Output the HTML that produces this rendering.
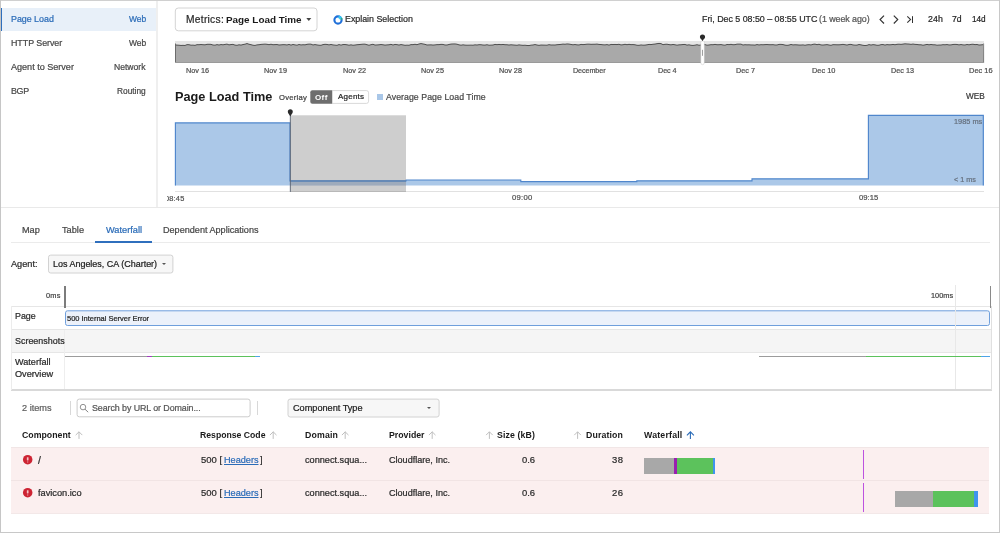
<!DOCTYPE html>
<html><head><meta charset="utf-8">
<style>
html,body{margin:0;padding:0;}
body{width:1000px;height:533px;position:relative;overflow:hidden;background:#fff;font-family:"Liberation Sans",sans-serif;color:#3c3c3c;}
.a{position:absolute;}
.t{position:absolute;white-space:nowrap;line-height:1;will-change:transform;-webkit-text-stroke:0.22px currentColor;}
</style></head><body>
<!-- outer frame -->
<div class="a" style="left:0;top:0;width:1000px;height:1px;background:#d0d0d0;"></div>
<div class="a" style="left:0;top:0;width:1px;height:533px;background:#c6c6c6;"></div>
<div class="a" style="left:999px;top:0;width:1px;height:533px;background:#c8c8c8;"></div>
<div class="a" style="left:0;top:532px;width:1000px;height:1px;background:#c8c8c8;"></div>

<!-- sidebar -->
<div class="a" style="left:1px;top:7.75px;width:155.5px;height:23.5px;background:#e8f0f9;"></div>
<div class="a" style="left:1px;top:7.75px;width:1.3px;height:23.5px;background:#2f6fbd;"></div>
<div class="a" style="left:156.2px;top:1px;width:1.4px;height:206px;background:#efefef;"></div>

<!-- boxes -->
<svg class="a" style="left:0;top:0;" width="1000" height="533" viewBox="0 0 1000 533">
<rect x="175.30" y="8.00" width="141.70" height="22.80" rx="3" fill="#fff" stroke="#d4d4d4" stroke-width="1"/>
<rect x="48.50" y="255.10" width="124.40" height="17.90" rx="2.2" fill="#f7f7f7" stroke="#d2d2d2" stroke-width="1"/>
<rect x="77.10" y="399.10" width="173.00" height="17.70" rx="2.2" fill="#fff" stroke="#cccccc" stroke-width="1"/>
<rect x="288.00" y="399.10" width="151.10" height="17.90" rx="2.2" fill="#f7f7f7" stroke="#d2d2d2" stroke-width="1"/>
<rect x="65.50" y="310.80" width="924.00" height="14.70" rx="2" fill="#ecf1fa" stroke="#6f9fdc" stroke-width="1"/>
<path d="M312.3 90.2 H332.5 V103.8 H312.3 A2 2 0 0 1 310.3 101.8 V92.2 A2 2 0 0 1 312.3 90.2 Z" fill="#6e6e6e"/>
<path d="M332.5 90.6 H366.4 A2.2 2.2 0 0 1 368.6 92.8 V101.2 A2.2 2.2 0 0 1 366.4 103.4 H332.5" fill="#fff" stroke="#cfcfcf" stroke-width="0.8"/>
</svg>
<!-- top toolbar -->
<svg class="a" style="left:305px;top:17px;" width="8" height="5" viewBox="0 0 8 5"><path d="M1.3 1.1 H6.3 L3.8 3.9 Z" fill="#444"/></svg>
<svg class="a" style="left:331.8px;top:13.8px;" width="12" height="12" viewBox="0 0 12 12"><circle cx="6" cy="6" r="3.6" fill="none" stroke="#1f6fd8" stroke-width="2.1"/><path d="M6.6 1.4 A4.6 4.6 0 0 1 10.5 5.2 L7.8 5.6 A2 2 0 0 0 6.4 4.2 Z" fill="#35c6f0"/><circle cx="9.6" cy="4.9" r="0.8" fill="#3aa860"/></svg>
<svg class="a" style="left:876px;top:13px;" width="40" height="13" viewBox="0 0 40 13"><g fill="none" stroke="#333" stroke-width="1.2"><path d="M8 2.7 L4.1 6.6 L8 10.5"/><path d="M17.8 2.7 L21.7 6.6 L17.8 10.5"/><path d="M31.3 3.3 L34.6 6.5 L31.3 9.7" stroke-width="1.05"/><path d="M36.5 3.2 V10" stroke-width="1"/></g></svg>

<!-- mini chart -->
<svg class="a" style="left:174.5px;top:34px;" width="820" height="32" viewBox="0 0 820 32">
<rect x="0" y="7" width="809" height="22" fill="#e6e6e6"/>
<path d="M0 10.92 L2 11.10 L4 11.23 L6 11.44 L8 11.33 L10 11.46 L12 10.63 L14 10.69 L16 11.19 L18 11.13 L20 11.35 L22 10.66 L24 10.71 L26 10.50 L28 10.71 L30 10.83 L32 10.33 L34 10.30 L36 10.36 L38 11.02 L40 11.16 L42 10.62 L44 11.02 L46 10.54 L48 10.80 L50 10.43 L52 10.13 L54 10.87 L56 10.54 L58 10.40 L60 11.10 L62 11.30 L64 10.77 L66 11.08 L68 10.55 L70 10.19 L72 9.54 L74 10.26 L76 10.66 L78 11.24 L80 11.43 L82 10.89 L84 10.71 L86 10.42 L88 10.28 L90 10.13 L92 10.30 L94 10.68 L96 10.25 L98 10.73 L100 10.61 L102 10.52 L104 10.99 L106 10.87 L108 10.65 L110 10.71 L112 10.97 L114 10.43 L116 11.11 L118 10.46 L120 10.90 L122 11.19 L124 10.49 L126 10.95 L128 10.73 L130 10.85 L132 10.33 L134 10.14 L136 10.18 L138 10.98 L140 10.57 L142 10.94 L144 11.23 L146 11.29 L148 10.62 L150 10.32 L152 10.46 L154 10.89 L156 10.46 L158 10.91 L160 11.15 L162 11.32 L164 10.57 L166 11.14 L168 10.55 L170 10.53 L172 10.79 L174 11.21 L176 10.83 L178 11.24 L180 11.04 L182 10.72 L184 10.58 L186 10.38 L188 10.19 L190 10.17 L192 10.71 L194 11.26 L196 10.67 L198 10.29 L200 11.06 L202 10.95 L204 10.77 L206 10.53 L208 10.77 L210 11.11 L212 10.90 L214 10.77 L216 10.34 L218 11.01 L220 10.43 L222 10.63 L224 11.06 L226 10.55 L228 10.92 L230 11.30 L232 11.16 L234 11.25 L236 10.61 L238 10.64 L240 10.31 L242 10.69 L244 10.00 L246 9.57 L248 9.96 L250 10.35 L252 11.00 L254 10.90 L256 10.87 L258 11.07 L260 10.90 L262 10.64 L264 10.63 L266 10.36 L268 10.45 L270 10.99 L272 11.01 L274 10.47 L276 10.08 L278 9.98 L280 9.94 L282 10.22 L284 10.85 L286 11.20 L288 10.84 L290 11.11 L292 11.21 L294 11.18 L296 11.14 L298 11.21 L300 10.85 L302 11.03 L304 10.68 L306 10.73 L308 11.04 L310 11.10 L312 10.73 L314 11.21 L316 11.14 L318 11.03 L320 10.41 L322 10.66 L324 10.43 L326 10.65 L328 10.45 L330 10.71 L332 10.76 L334 11.04 L336 10.77 L338 10.94 L340 11.11 L342 11.27 L344 10.86 L346 11.17 L348 11.34 L350 11.23 L352 11.47 L354 11.56 L356 11.16 L358 10.99 L360 10.55 L362 11.03 L364 11.34 L366 11.02 L368 11.09 L370 11.15 L372 11.19 L374 10.65 L376 11.01 L378 10.97 L380 11.02 L382 10.71 L384 10.57 L386 10.40 L388 10.10 L390 10.26 L392 9.94 L394 10.09 L396 10.46 L398 10.81 L400 10.53 L402 10.86 L404 10.96 L406 10.41 L408 10.60 L410 10.44 L412 10.19 L414 10.16 L416 10.33 L418 10.27 L420 10.25 L422 10.09 L424 10.45 L426 10.52 L428 10.79 L430 10.88 L432 10.58 L434 11.10 L436 10.44 L438 10.54 L440 10.46 L442 10.56 L444 10.31 L446 10.91 L448 10.72 L450 10.30 L452 10.69 L454 10.34 L456 10.64 L458 10.57 L460 10.78 L462 11.25 L464 11.32 L466 10.95 L468 11.18 L470 11.11 L472 10.81 L474 10.41 L476 10.57 L478 10.28 L480 10.05 L482 9.67 L484 9.41 L486 9.62 L488 10.66 L490 10.32 L492 10.23 L494 10.62 L496 10.84 L498 10.46 L500 10.78 L502 11.18 L504 10.85 L506 10.75 L508 10.51 L510 10.46 L512 11.12 L514 10.82 L516 11.27 L518 11.43 L520 11.18 L522 10.73 L524 11.25 L526 11.00 L528 10.80 L530 10.62 L532 11.20 L534 10.97 L536 10.66 L538 10.72 L540 10.38 L542 10.73 L544 10.71 L546 10.55 L548 10.97 L550 11.20 L552 10.48 L554 10.64 L556 10.35 L558 10.73 L560 10.65 L562 10.16 L564 10.15 L566 10.16 L568 11.03 L570 10.71 L572 10.87 L574 10.81 L576 10.95 L578 10.97 L580 11.12 L582 10.56 L584 10.95 L586 10.67 L588 10.77 L590 10.62 L592 10.52 L594 10.70 L596 10.72 L598 10.63 L600 10.97 L602 10.97 L604 10.41 L606 10.38 L608 10.57 L610 11.11 L612 11.33 L614 11.08 L616 10.44 L618 10.92 L620 10.78 L622 10.87 L624 11.04 L626 11.04 L628 10.89 L630 11.25 L632 10.87 L634 10.66 L636 10.94 L638 10.31 L640 10.12 L642 10.68 L644 10.28 L646 10.92 L648 11.06 L650 10.85 L652 10.61 L654 11.00 L656 11.30 L658 10.67 L660 10.72 L662 10.81 L664 10.80 L666 10.63 L668 10.38 L670 10.70 L672 11.07 L674 10.49 L676 10.39 L678 10.93 L680 11.15 L682 11.12 L684 10.47 L686 10.87 L688 11.31 L690 11.53 L692 11.33 L694 10.59 L696 11.05 L698 10.63 L700 10.87 L702 11.28 L704 11.23 L706 10.63 L708 10.52 L710 11.09 L712 10.58 L714 10.81 L716 10.72 L718 10.42 L720 10.75 L722 10.32 L724 10.19 L726 10.39 L728 10.11 L730 9.82 L732 9.98 L734 10.07 L736 10.38 L738 10.05 L740 10.39 L742 10.47 L744 10.77 L746 10.78 L748 11.23 L750 10.87 L752 10.39 L754 10.81 L756 10.46 L758 10.78 L760 10.80 L762 11.21 L764 11.04 L766 11.03 L768 10.67 L770 10.79 L772 10.55 L774 10.94 L776 10.88 L778 10.47 L780 10.39 L782 10.48 L784 10.89 L786 10.52 L788 10.89 L790 10.99 L792 10.47 L794 10.82 L796 10.40 L798 10.25 L800 10.64 L802 10.47 L804 11.03 L806 10.88 L808 10.66 L809 29 L0 29 Z" fill="#a9a9a9"/>
<path d="M0 10.92 L2 11.10 L4 11.23 L6 11.44 L8 11.33 L10 11.46 L12 10.63 L14 10.69 L16 11.19 L18 11.13 L20 11.35 L22 10.66 L24 10.71 L26 10.50 L28 10.71 L30 10.83 L32 10.33 L34 10.30 L36 10.36 L38 11.02 L40 11.16 L42 10.62 L44 11.02 L46 10.54 L48 10.80 L50 10.43 L52 10.13 L54 10.87 L56 10.54 L58 10.40 L60 11.10 L62 11.30 L64 10.77 L66 11.08 L68 10.55 L70 10.19 L72 9.54 L74 10.26 L76 10.66 L78 11.24 L80 11.43 L82 10.89 L84 10.71 L86 10.42 L88 10.28 L90 10.13 L92 10.30 L94 10.68 L96 10.25 L98 10.73 L100 10.61 L102 10.52 L104 10.99 L106 10.87 L108 10.65 L110 10.71 L112 10.97 L114 10.43 L116 11.11 L118 10.46 L120 10.90 L122 11.19 L124 10.49 L126 10.95 L128 10.73 L130 10.85 L132 10.33 L134 10.14 L136 10.18 L138 10.98 L140 10.57 L142 10.94 L144 11.23 L146 11.29 L148 10.62 L150 10.32 L152 10.46 L154 10.89 L156 10.46 L158 10.91 L160 11.15 L162 11.32 L164 10.57 L166 11.14 L168 10.55 L170 10.53 L172 10.79 L174 11.21 L176 10.83 L178 11.24 L180 11.04 L182 10.72 L184 10.58 L186 10.38 L188 10.19 L190 10.17 L192 10.71 L194 11.26 L196 10.67 L198 10.29 L200 11.06 L202 10.95 L204 10.77 L206 10.53 L208 10.77 L210 11.11 L212 10.90 L214 10.77 L216 10.34 L218 11.01 L220 10.43 L222 10.63 L224 11.06 L226 10.55 L228 10.92 L230 11.30 L232 11.16 L234 11.25 L236 10.61 L238 10.64 L240 10.31 L242 10.69 L244 10.00 L246 9.57 L248 9.96 L250 10.35 L252 11.00 L254 10.90 L256 10.87 L258 11.07 L260 10.90 L262 10.64 L264 10.63 L266 10.36 L268 10.45 L270 10.99 L272 11.01 L274 10.47 L276 10.08 L278 9.98 L280 9.94 L282 10.22 L284 10.85 L286 11.20 L288 10.84 L290 11.11 L292 11.21 L294 11.18 L296 11.14 L298 11.21 L300 10.85 L302 11.03 L304 10.68 L306 10.73 L308 11.04 L310 11.10 L312 10.73 L314 11.21 L316 11.14 L318 11.03 L320 10.41 L322 10.66 L324 10.43 L326 10.65 L328 10.45 L330 10.71 L332 10.76 L334 11.04 L336 10.77 L338 10.94 L340 11.11 L342 11.27 L344 10.86 L346 11.17 L348 11.34 L350 11.23 L352 11.47 L354 11.56 L356 11.16 L358 10.99 L360 10.55 L362 11.03 L364 11.34 L366 11.02 L368 11.09 L370 11.15 L372 11.19 L374 10.65 L376 11.01 L378 10.97 L380 11.02 L382 10.71 L384 10.57 L386 10.40 L388 10.10 L390 10.26 L392 9.94 L394 10.09 L396 10.46 L398 10.81 L400 10.53 L402 10.86 L404 10.96 L406 10.41 L408 10.60 L410 10.44 L412 10.19 L414 10.16 L416 10.33 L418 10.27 L420 10.25 L422 10.09 L424 10.45 L426 10.52 L428 10.79 L430 10.88 L432 10.58 L434 11.10 L436 10.44 L438 10.54 L440 10.46 L442 10.56 L444 10.31 L446 10.91 L448 10.72 L450 10.30 L452 10.69 L454 10.34 L456 10.64 L458 10.57 L460 10.78 L462 11.25 L464 11.32 L466 10.95 L468 11.18 L470 11.11 L472 10.81 L474 10.41 L476 10.57 L478 10.28 L480 10.05 L482 9.67 L484 9.41 L486 9.62 L488 10.66 L490 10.32 L492 10.23 L494 10.62 L496 10.84 L498 10.46 L500 10.78 L502 11.18 L504 10.85 L506 10.75 L508 10.51 L510 10.46 L512 11.12 L514 10.82 L516 11.27 L518 11.43 L520 11.18 L522 10.73 L524 11.25 L526 11.00 L528 10.80 L530 10.62 L532 11.20 L534 10.97 L536 10.66 L538 10.72 L540 10.38 L542 10.73 L544 10.71 L546 10.55 L548 10.97 L550 11.20 L552 10.48 L554 10.64 L556 10.35 L558 10.73 L560 10.65 L562 10.16 L564 10.15 L566 10.16 L568 11.03 L570 10.71 L572 10.87 L574 10.81 L576 10.95 L578 10.97 L580 11.12 L582 10.56 L584 10.95 L586 10.67 L588 10.77 L590 10.62 L592 10.52 L594 10.70 L596 10.72 L598 10.63 L600 10.97 L602 10.97 L604 10.41 L606 10.38 L608 10.57 L610 11.11 L612 11.33 L614 11.08 L616 10.44 L618 10.92 L620 10.78 L622 10.87 L624 11.04 L626 11.04 L628 10.89 L630 11.25 L632 10.87 L634 10.66 L636 10.94 L638 10.31 L640 10.12 L642 10.68 L644 10.28 L646 10.92 L648 11.06 L650 10.85 L652 10.61 L654 11.00 L656 11.30 L658 10.67 L660 10.72 L662 10.81 L664 10.80 L666 10.63 L668 10.38 L670 10.70 L672 11.07 L674 10.49 L676 10.39 L678 10.93 L680 11.15 L682 11.12 L684 10.47 L686 10.87 L688 11.31 L690 11.53 L692 11.33 L694 10.59 L696 11.05 L698 10.63 L700 10.87 L702 11.28 L704 11.23 L706 10.63 L708 10.52 L710 11.09 L712 10.58 L714 10.81 L716 10.72 L718 10.42 L720 10.75 L722 10.32 L724 10.19 L726 10.39 L728 10.11 L730 9.82 L732 9.98 L734 10.07 L736 10.38 L738 10.05 L740 10.39 L742 10.47 L744 10.77 L746 10.78 L748 11.23 L750 10.87 L752 10.39 L754 10.81 L756 10.46 L758 10.78 L760 10.80 L762 11.21 L764 11.04 L766 11.03 L768 10.67 L770 10.79 L772 10.55 L774 10.94 L776 10.88 L778 10.47 L780 10.39 L782 10.48 L784 10.89 L786 10.52 L788 10.89 L790 10.99 L792 10.47 L794 10.82 L796 10.40 L798 10.25 L800 10.64 L802 10.47 L804 11.03 L806 10.88 L808 10.66" fill="none" stroke="#484848" stroke-width="0.95" stroke-linejoin="round"/>
<rect x="0" y="9.5" width="0.9" height="19.5" fill="#666"/>
<rect x="808.2" y="9.5" width="0.9" height="19.5" fill="#777"/>
<rect x="0" y="28" width="809" height="1" fill="#9a9a9a"/>
<rect x="525.8" y="6.8" width="3.5" height="23.8" rx="1.6" fill="#fff" stroke="#bdbdbd" stroke-width="0.4"/>
<rect x="527.2" y="15.8" width="0.7" height="6" fill="#777"/>
<path d="M527.5 7.2 C527 5.6 524.9 4.8 524.9 3.1 A2.6 2.6 0 0 1 530.1 3.1 C530.1 4.8 528 5.6 527.5 7.2 Z" fill="#2a2a2a"/>
</svg>

<!-- heading row controls -->
<div class="a" style="left:377.3px;top:94.4px;width:5.6px;height:5.2px;background:#a9c7e8;"></div>

<!-- main chart -->
<svg class="a" style="left:160px;top:105px;" width="840" height="90" viewBox="0 0 840 90">
<path d="M15 80.4 V17.9 H130 V75.9 H246 V75 H360.8 V76.6 H476.8 V75.8 H592 V73.8 H708.2 V10 H823.8 V80.4 Z" fill="#abc8e8"/>
<path d="M15.4 80.4 V17.9 H130 V75.9 H246 V75 H360.8 V76.6 H476.8 V75.8 H592 V73.8 H708.4 V10.4 H823.3 V80.4" fill="none" stroke="#4f86cc" stroke-width="1.15"/>
<rect x="130.3" y="10.3" width="115.7" height="76.5" fill="#ababab" fill-opacity="0.58"/>
<rect x="130.3" y="76.5" width="115.7" height="4" fill="#8f9db3" fill-opacity="0.45"/>
<rect x="130.3" y="75.4" width="115.7" height="1.2" fill="#4877b4"/>
<rect x="15" y="86" width="809" height="0.9" fill="#dedede"/>
<rect x="130.3" y="86" width="115.7" height="0.9" fill="#b4b4b4"/>
<rect x="129.85" y="8" width="0.9" height="78.9" fill="#566070"/>
<path d="M130.3 11.6 C129.6 9.6 127.8 8.6 127.8 6.8 A2.5 2.5 0 0 1 132.8 6.8 C132.8 8.6 131 9.6 130.3 11.6 Z" fill="#2a2a2a"/>
</svg>
<div class="a" style="left:167.3px;top:190px;width:30px;height:16px;overflow:hidden;"><div class="t" style="left:-2.7px;top:4.8px;font-size:7.4px;color:#505050;letter-spacing:0.2px;">08:45</div></div>

<!-- divider -->
<div class="a" style="left:1px;top:206.8px;width:998px;height:1px;background:#e9e9e9;"></div>

<!-- tabs -->
<div class="a" style="left:11px;top:242px;width:979px;height:1px;background:#ebebeb;"></div>
<div class="a" style="left:95px;top:241.2px;width:57px;height:2px;background:#2f6fbd;"></div>

<!-- agent select -->
<div class="a" style="left:161.8px;top:263.4px;width:0;height:0;border-left:2.3px solid transparent;border-right:2.3px solid transparent;border-top:2.5px solid #555;"></div>

<!-- timeline grid -->
<div class="a" style="left:11px;top:306.2px;width:980px;height:1px;background:#e6e6e6;"></div>
<div class="a" style="left:11px;top:330px;width:980px;height:22px;background:#f5f5f5;"></div>
<div class="a" style="left:11px;top:329.2px;width:980px;height:1px;background:#e6e6e6;"></div>
<div class="a" style="left:11px;top:351.5px;width:980px;height:1px;background:#e6e6e6;"></div>
<div class="a" style="left:11px;top:389px;width:980.5px;height:1.6px;background:#d9d9d9;"></div>
<div class="a" style="left:11px;top:306px;width:1px;height:84px;background:#ececec;"></div>
<div class="a" style="left:990.5px;top:306px;width:1px;height:84px;background:#e0e0e0;"></div>
<div class="a" style="left:63.6px;top:330px;width:1px;height:59px;background:#eeeeee;"></div>
<div class="a" style="left:955px;top:285px;width:1px;height:104px;background:#e8e8e8;"></div>
<div class="a" style="left:64px;top:285.6px;width:1.6px;height:22.6px;background:#7c7c7c;"></div>
<div class="a" style="left:989.6px;top:285.6px;width:1.4px;height:22.6px;background:#8a8a8a;"></div>

<!-- overview lines -->
<div class="a" style="left:65px;top:355.5px;width:81.5px;height:1.2px;background:#9c9c9c;"></div>
<div class="a" style="left:146.5px;top:355.5px;width:5px;height:1.2px;background:#a13fc0;"></div>
<div class="a" style="left:151.5px;top:355.5px;width:103.5px;height:1.2px;background:#5cc25c;"></div>
<div class="a" style="left:255px;top:355.5px;width:5px;height:1.2px;background:#4da3e8;"></div>
<div class="a" style="left:759px;top:355.5px;width:107px;height:1.2px;background:#9c9c9c;"></div>
<div class="a" style="left:865.8px;top:355.5px;width:115.5px;height:1.2px;background:#5cc25c;"></div>
<div class="a" style="left:981.3px;top:355.5px;width:8.7px;height:1.2px;background:#4da3e8;"></div>

<!-- filter row -->
<div class="a" style="left:69.8px;top:401px;width:1px;height:14px;background:#d8d8d8;"></div>
<svg class="a" style="left:79px;top:402.6px;" width="11" height="11" viewBox="0 0 11 11"><circle cx="4" cy="4.1" r="2.75" fill="none" stroke="#858585" stroke-width="0.9"/><path d="M6 6.2 L9.2 9.2" stroke="#858585" stroke-width="1"/></svg>
<div class="a" style="left:256.6px;top:401px;width:1px;height:14px;background:#d8d8d8;"></div>
<div class="a" style="left:427.3px;top:407.2px;width:0;height:0;border-left:2.4px solid transparent;border-right:2.4px solid transparent;border-top:2.6px solid #555;"></div>

<!-- header sort arrows -->
<svg class="a" style="left:0;top:430px;" width="1000" height="10" viewBox="0 0 1000 10">
<g fill="none" stroke="#bcbcbc" stroke-width="0.95">
<path d="M79 8.9 V1.8 M75.7 5.1 L79 1.8 L82.3 5.1"/>
<path d="M273.2 8.9 V1.8 M269.9 5.1 L273.2 1.8 L276.5 5.1"/>
<path d="M345.2 8.9 V1.8 M341.9 5.1 L345.2 1.8 L348.5 5.1"/>
<path d="M432.2 8.9 V1.8 M428.9 5.1 L432.2 1.8 L435.5 5.1"/>
<path d="M489.4 8.9 V1.8 M486.09999999999997 5.1 L489.4 1.8 L492.7 5.1"/>
<path d="M577.6 8.9 V1.8 M574.3000000000001 5.1 L577.6 1.8 L580.9 5.1"/>
</g>
<path d="M690.4 8.9 V1.8 M686.9 5.3 L690.4 1.8 L693.9 5.3" fill="none" stroke="#2b6cb8" stroke-width="1.1"/>
</svg>

<!-- rows -->
<div class="a" style="left:11px;top:447.3px;width:978px;height:66.2px;background:#fbefef;"></div>
<div class="a" style="left:11px;top:447px;width:978px;height:1px;background:#f1e6e6;"></div>
<div class="a" style="left:11px;top:480.2px;width:978px;height:1px;background:#f1e4e4;"></div>
<div class="a" style="left:11px;top:513px;width:978px;height:0.6px;background:#f3e8e8;"></div>
<svg class="a" style="left:22.2px;top:453.8px;" width="11.4" height="11.4" viewBox="0 0 11.4 11.4"><circle cx="5.7" cy="5.7" r="4.75" fill="#cd2433"/><rect x="4.85" y="3.2" width="1.7" height="3.2" rx="0.4" fill="#f3c3c7"/><circle cx="5.7" cy="8" r="0.7" fill="#e58d95"/></svg>
<svg class="a" style="left:22.2px;top:487px;" width="11.4" height="11.4" viewBox="0 0 11.4 11.4"><circle cx="5.7" cy="5.7" r="4.75" fill="#cd2433"/><rect x="4.85" y="3.2" width="1.7" height="3.2" rx="0.4" fill="#f3c3c7"/><circle cx="5.7" cy="8" r="0.7" fill="#e58d95"/></svg>

<!-- waterfall bars -->
<div class="a" style="left:644.4px;top:457.6px;width:29.4px;height:16.6px;background:#a8a8a8;"></div>
<div class="a" style="left:673.6px;top:457.6px;width:0.8px;height:16.6px;background:#c08a50;"></div>
<div class="a" style="left:674.3px;top:457.6px;width:2.4px;height:16.6px;background:#9a1fb0;"></div>
<div class="a" style="left:676.7px;top:457.6px;width:36.3px;height:16.6px;background:#5cc25c;"></div>
<div class="a" style="left:712.9px;top:457.6px;width:2.1px;height:16.6px;background:#3f94ee;"></div>
<div class="a" style="left:863.2px;top:449.8px;width:1px;height:29px;background:#bd52e0;"></div>
<div class="a" style="left:863.2px;top:483.1px;width:1px;height:28.8px;background:#bd52e0;"></div>
<div class="a" style="left:894.6px;top:490.5px;width:38.6px;height:16.4px;background:#a8a8a8;"></div>
<div class="a" style="left:933px;top:490.5px;width:41.3px;height:16.4px;background:#5cc25c;"></div>
<div class="a" style="left:974.2px;top:490.5px;width:3.7px;height:16.4px;background:#3f94ee;"></div>

<!-- texts -->
<div class="t" style="left:10.80px;top:15.02px;font-size:8.88px;color:#2b6cb8;letter-spacing:-0.015px;">Page Load</div>
<div class="t" style="left:128.60px;top:15.01px;font-size:8.45px;color:#2b6cb8;letter-spacing:-0.001px;">Web</div>
<div class="t" style="left:10.80px;top:39.02px;font-size:8.88px;color:#474747;letter-spacing:-0.039px;">HTTP Server</div>
<div class="t" style="left:128.60px;top:39.01px;font-size:8.45px;color:#474747;letter-spacing:-0.001px;">Web</div>
<div class="t" style="left:10.80px;top:63.01px;font-size:9.08px;color:#474747;letter-spacing:-0.012px;">Agent to Server</div>
<div class="t" style="left:114.30px;top:63.01px;font-size:8.60px;color:#474747;letter-spacing:-0.004px;">Network</div>
<div class="t" style="left:10.80px;top:87.02px;font-size:8.88px;color:#474747;letter-spacing:-0.317px;">BGP</div>
<div class="t" style="left:117.10px;top:87.00px;font-size:8.34px;color:#474747;letter-spacing:-0.003px;">Routing</div>
<div class="t" style="left:185.50px;top:15.00px;font-size:10.25px;color:#2a2a2a;letter-spacing:0.266px;">Metrics:</div>
<div class="t" style="left:226.10px;top:15.00px;font-size:9.90px;color:#1a1a1a;letter-spacing:0.003px;font-weight:bold;-webkit-text-stroke:0;">Page Load Time</div>
<div class="t" style="left:345.10px;top:15.02px;font-size:8.88px;color:#2a2a2a;letter-spacing:-0.017px;">Explain Selection</div>
<div class="t" style="left:701.70px;top:15.02px;font-size:8.88px;color:#2a2a2a;letter-spacing:-0.022px;">Fri, Dec 5 08:50 – 08:55 UTC</div>
<div class="t" style="left:819.10px;top:15.02px;font-size:8.88px;color:#555;letter-spacing:-0.059px;">(1 week ago)</div>
<div class="t" style="left:928.20px;top:15.00px;font-size:8.75px;color:#262626;letter-spacing:0.097px;">24h</div>
<div class="t" style="left:952.40px;top:15.01px;font-size:8.64px;color:#262626;letter-spacing:0.003px;">7d</div>
<div class="t" style="left:971.90px;top:16.01px;font-size:8.20px;color:#262626;letter-spacing:-0.024px;">14d</div>
<div class="t" style="left:185.50px;top:67.01px;font-size:7.30px;color:#505050;letter-spacing:-0.004px;">Nov 16</div>
<div class="t" style="left:264.00px;top:67.01px;font-size:7.24px;color:#505050;letter-spacing:-0.004px;">Nov 19</div>
<div class="t" style="left:342.50px;top:67.01px;font-size:7.27px;color:#505050;letter-spacing:-0.005px;">Nov 22</div>
<div class="t" style="left:420.60px;top:67.01px;font-size:7.24px;color:#505050;letter-spacing:-0.004px;">Nov 25</div>
<div class="t" style="left:498.60px;top:67.01px;font-size:7.24px;color:#505050;letter-spacing:-0.004px;">Nov 28</div>
<div class="t" style="left:572.50px;top:68.00px;font-size:7.18px;color:#505050;letter-spacing:-0.074px;">December</div>
<div class="t" style="left:658.00px;top:68.00px;font-size:7.18px;color:#505050;letter-spacing:-0.050px;">Dec 4</div>
<div class="t" style="left:735.50px;top:67.00px;font-size:7.28px;color:#505050;letter-spacing:0.003px;">Dec 7</div>
<div class="t" style="left:812.00px;top:67.01px;font-size:7.42px;color:#505050;letter-spacing:0.005px;">Dec 10</div>
<div class="t" style="left:890.50px;top:67.01px;font-size:7.27px;color:#505050;letter-spacing:-0.005px;">Dec 13</div>
<div class="t" style="left:968.50px;top:67.01px;font-size:7.46px;color:#505050;letter-spacing:-0.004px;">Dec 16</div>
<div class="t" style="left:174.70px;top:91.00px;font-size:12.74px;color:#1a1a1a;letter-spacing:-0.003px;font-weight:bold;-webkit-text-stroke:0;">Page Load Time</div>
<div class="t" style="left:278.80px;top:94.01px;font-size:7.66px;color:#444;letter-spacing:0.230px;">Overlay</div>
<div class="t" style="left:315.30px;top:94.00px;font-size:8.02px;color:#fff;letter-spacing:0.374px;font-weight:bold;-webkit-text-stroke:0;">Off</div>
<div class="t" style="left:337.50px;top:93.00px;font-size:8.02px;color:#262626;letter-spacing:0.205px;">Agents</div>
<div class="t" style="left:386.00px;top:93.00px;font-size:8.75px;color:#484848;letter-spacing:0.050px;">Average Page Load Time</div>
<div class="t" style="left:966.10px;top:93.02px;font-size:8.22px;color:#3a3a3a;letter-spacing:-0.011px;">WEB</div>
<div class="t" style="left:953.90px;top:118.01px;font-size:7.36px;color:#66717f;letter-spacing:-0.005px;">1985 ms</div>
<div class="t" style="left:954.00px;top:176.01px;font-size:7.24px;color:#66717f;letter-spacing:-0.004px;">&lt; 1 ms</div>
<div class="t" style="left:511.50px;top:194.01px;font-size:7.66px;color:#505050;letter-spacing:0.266px;">09:00</div>
<div class="t" style="left:859.20px;top:194.01px;font-size:7.66px;color:#505050;letter-spacing:0.006px;">09:15</div>
<div class="t" style="left:22.20px;top:226.01px;font-size:9.17px;color:#474747;letter-spacing:-0.004px;">Map</div>
<div class="t" style="left:61.90px;top:226.01px;font-size:9.22px;color:#474747;letter-spacing:-0.009px;">Table</div>
<div class="t" style="left:105.50px;top:226.01px;font-size:9.23px;color:#2b6cb8;letter-spacing:-0.003px;">Waterfall</div>
<div class="t" style="left:163.00px;top:226.01px;font-size:9.11px;color:#474747;letter-spacing:-0.003px;">Dependent Applications</div>
<div class="t" style="left:10.90px;top:260.00px;font-size:9.19px;color:#2a2a2a;letter-spacing:-0.005px;">Agent:</div>
<div class="t" style="left:53.40px;top:260.01px;font-size:8.98px;color:#1c1c1c;letter-spacing:-0.004px;">Los Angeles, CA (Charter)</div>
<div class="t" style="left:46.40px;top:292.00px;font-size:7.35px;color:#444;letter-spacing:0.242px;">0ms</div>
<div class="t" style="left:930.50px;top:292.00px;font-size:7.35px;color:#444;letter-spacing:0.031px;">100ms</div>
<div class="t" style="left:15.10px;top:312.02px;font-size:8.88px;color:#2a2a2a;letter-spacing:-0.034px;">Page</div>
<div class="t" style="left:67.40px;top:315.00px;font-size:7.47px;color:#262626;letter-spacing:-0.004px;">500 Internal Server Error</div>
<div class="t" style="left:15.10px;top:337.01px;font-size:8.95px;color:#2a2a2a;letter-spacing:-0.008px;">Screenshots</div>
<div class="t" style="left:15.10px;top:358.01px;font-size:9.13px;color:#2a2a2a;letter-spacing:-0.008px;">Waterfall</div>
<div class="t" style="left:15.10px;top:370.01px;font-size:9.17px;color:#2a2a2a;letter-spacing:-0.009px;">Overview</div>
<div class="t" style="left:22.10px;top:404.01px;font-size:9.17px;color:#5e5e5e;letter-spacing:-0.002px;">2 items</div>
<div class="t" style="left:91.90px;top:404.02px;font-size:8.88px;color:#555;letter-spacing:-0.079px;">Search by URL or Domain...</div>
<div class="t" style="left:292.50px;top:404.01px;font-size:9.17px;color:#1c1c1c;letter-spacing:-0.006px;">Component Type</div>
<div class="t" style="left:22.10px;top:431.00px;font-size:8.75px;color:#1a1a1a;letter-spacing:0.021px;font-weight:bold;-webkit-text-stroke:0;">Component</div>
<div class="t" style="left:200.00px;top:431.00px;font-size:8.68px;color:#1a1a1a;letter-spacing:-0.004px;font-weight:bold;-webkit-text-stroke:0;">Response Code</div>
<div class="t" style="left:305.00px;top:431.00px;font-size:8.75px;color:#1a1a1a;letter-spacing:0.151px;font-weight:bold;-webkit-text-stroke:0;">Domain</div>
<div class="t" style="left:389.00px;top:431.00px;font-size:8.75px;color:#1a1a1a;font-weight:bold;-webkit-text-stroke:0;">Provider</div>
<div class="t" style="left:497.00px;top:431.00px;font-size:8.75px;color:#1a1a1a;letter-spacing:0.127px;font-weight:bold;-webkit-text-stroke:0;">Size (kB)</div>
<div class="t" style="left:586.00px;top:431.00px;font-size:8.75px;color:#1a1a1a;letter-spacing:0.127px;font-weight:bold;-webkit-text-stroke:0;">Duration</div>
<div class="t" style="left:644.00px;top:431.00px;font-size:8.75px;color:#1a1a1a;letter-spacing:0.207px;font-weight:bold;-webkit-text-stroke:0;">Waterfall</div>
<div class="t" style="left:38.10px;top:456.00px;font-size:10.40px;color:#2a2a2a;">/</div>
<div class="t" style="left:200.50px;top:455.00px;font-size:9.47px;color:#2a2a2a;letter-spacing:-0.013px;">500 [</div>
<div class="t" style="left:223.50px;top:456.00px;font-size:9.15px;color:#2b6cb8;text-decoration:underline;text-decoration-thickness:0.8px;text-underline-offset:1px;">Headers</div>
<div class="t" style="left:259.60px;top:456.01px;font-size:9.20px;color:#2a2a2a;">]</div>
<div class="t" style="left:305.00px;top:456.01px;font-size:9.17px;color:#2a2a2a;letter-spacing:-0.007px;">connect.squa...</div>
<div class="t" style="left:389.00px;top:456.02px;font-size:9.09px;color:#2a2a2a;letter-spacing:-0.004px;">Cloudflare, Inc.</div>
<div class="t" style="left:522.00px;top:455.01px;font-size:9.45px;color:#2a2a2a;letter-spacing:-0.008px;">0.6</div>
<div class="t" style="left:611.50px;top:455.01px;font-size:9.47px;color:#2a2a2a;letter-spacing:0.477px;">38</div>
<div class="t" style="left:38.00px;top:489.02px;font-size:9.25px;color:#2a2a2a;letter-spacing:-0.009px;">favicon.ico</div>
<div class="t" style="left:200.50px;top:488.00px;font-size:9.47px;color:#2a2a2a;letter-spacing:-0.013px;">500 [</div>
<div class="t" style="left:223.50px;top:489.00px;font-size:9.15px;color:#2b6cb8;text-decoration:underline;text-decoration-thickness:0.8px;text-underline-offset:1px;">Headers</div>
<div class="t" style="left:259.60px;top:489.01px;font-size:9.20px;color:#2a2a2a;">]</div>
<div class="t" style="left:305.00px;top:489.01px;font-size:9.17px;color:#2a2a2a;letter-spacing:-0.007px;">connect.squa...</div>
<div class="t" style="left:389.00px;top:489.02px;font-size:9.09px;color:#2a2a2a;letter-spacing:-0.004px;">Cloudflare, Inc.</div>
<div class="t" style="left:522.00px;top:488.01px;font-size:9.45px;color:#2a2a2a;letter-spacing:-0.008px;">0.6</div>
<div class="t" style="left:611.50px;top:488.01px;font-size:9.47px;color:#2a2a2a;letter-spacing:0.477px;">26</div>
</body></html>
